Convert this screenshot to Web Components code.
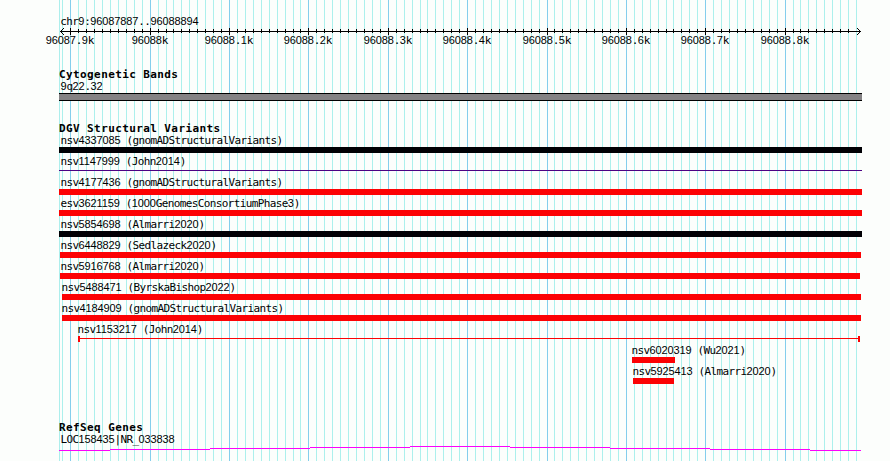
<!DOCTYPE html>
<html lang="en">
<head>
<meta charset="utf-8">
<title>chr9:96087887..96088894</title>
<style>
html,body{margin:0;background:#fcfefc}
body{width:890px;height:461px;overflow:hidden}
</style>
</head>
<body>
<genome-browser></genome-browser>
<script>
const LEFT = 59;
const gridX = i => Math.floor(70.82 + i * 800 / 100.8);
const rect = (x, y, w, h, c) => `<rect x="${x}" y="${y}" width="${w}" height="${h}" fill="${c}"/>`;

/* Fixed-pitch label; digits use an undotted zero face. */
class PitchText extends HTMLElement {
  connectedCallback() {
    const bold = this.hasAttribute('bold');
    const text = this.getAttribute('text').replace(/\d+/g, d => `<span>${d}</span>`);
    this.attachShadow({mode: 'open'}).innerHTML = `<style>
      :host{display:block;white-space:nowrap;color:#000;height:13px;line-height:13px;
        font-family:"DejaVu Sans Mono",monospace;font-size:11px;
        font-weight:${bold ? 700 : 400};letter-spacing:${bold ? .4 : -.622}px}
      span{font-family:"Liberation Sans",sans-serif;font-size:11px;line-height:0;letter-spacing:-.117px}
    </style>${text}`;
  }
}

class GridLines extends HTMLElement {
  connectedCallback() {
    let s = rect(LEFT, 0, 1, 461, '#aceeec');
    for (let i = -1; i < 100; i++) s += rect(gridX(i), 0, 1, 461, i % 10 ? '#acf0ec' : '#84ceec');
    this.attachShadow({mode: 'open'}).innerHTML = `<style>:host{position:absolute;inset:0}svg{display:block}</style>
      <svg width="890" height="461" shape-rendering="crispEdges">${s}</svg>`;
  }
}

class ScaleRuler extends HTMLElement {
  connectedCallback() {
    let s = rect(60, 3, 801, 1, '#000');
    for (let i = 0; i < 99; i++) s += i % 10 ? rect(gridX(i), 1, 1, 4, '#000') : rect(gridX(i), 0, 1, 7, '#000');
    for (let k = 1; k < 4; k++) for (const d of [-k, k])
      s += rect(60 + k, 3 + d, 1, 1, '#000') + rect(860 - k, 3 + d, 1, 1, '#000');
    const names = ['96087.9k', '96088k', ...[1,2,3,4,5,6,7,8].map(n => `96088.${n}k`)];
    let prev = 0;
    const labels = names.map((n, i) => {
      const x = gridX(i * 10) - n.length * 3 - 0.3, w = n.length * 6, gap = x - prev;
      prev = x + w;
      return `<pitch-text text="${n}" style="margin-left:${gap}px;width:${w}px"></pitch-text>`;
    }).join('');
    this.attachShadow({mode: 'open'}).innerHTML = `<style>
      :host{display:block;height:34px}svg{display:block}.l{display:flex;margin-top:-1px}.l>*{flex:none}</style>
      <svg width="890" height="7" shape-rendering="crispEdges">${s}</svg><div class="l">${labels}</div>`;
  }
}

class FeatureRow extends HTMLElement {
  connectedCallback() {
    const a = n => this.getAttribute(n);
    const x = +a('from'), e = +a('to'), w = e - x, kind = a('kind') || 'bar', c = a('color');
    const shape = {
      bar: () => rect(x, 0, w, 6, c),
      line: () => rect(x, 2, w, 1, c),
      span: () => rect(x, 2, w, 1, c) + rect(x, 0, 2, 6, c) + rect(e - 2, 0, 2, 6, c),
      band: () => rect(x, 0, w, 8, '#000') + rect(x, 1, w, 6, '#848284'),
      steps: () => [59,110,210,310,410,510,610,710,810].map((p, i, all) =>
        rect(p, Math.abs(i - 4), (all[i + 1] || e) - p, 1, c)).join('')
    }[kind]();
    this.attachShadow({mode: 'open'}).innerHTML = `<style>
      :host{display:flex;flex-direction:column;height:21px}
      pitch-text{margin:2px 0 0 ${a('label-x') - 0.5}px}
      svg{display:block;flex:none}</style>
      <pitch-text text="${a('label')}"></pitch-text>
      <svg width="890" height="8" shape-rendering="crispEdges">${shape}</svg>`;
  }
}

class TrackGroup extends HTMLElement {
  connectedCallback() {
    this.attachShadow({mode: 'open'}).innerHTML = `<style>
      :host{display:block}.t{padding-left:59px;height:10px}</style>
      <div class="t"><pitch-text bold text="${this.getAttribute('heading')}"></pitch-text></div><slot></slot>`;
  }
}

class GenomeBrowser extends HTMLElement {
  connectedCallback() {
    const R = '#fc0204', K = '#000004';
    const rows = [
      ['nsv4337085 (gnomADStructuralVariants)', 61, 59, 862, K],
      ['nsv1147999 (John2014)', 61, 59, 862, '#4c0284', 'line'],
      ['nsv4177436 (gnomADStructuralVariants)', 61, 59, 862, R],
      ['esv3621159 (1000GenomesConsortiumPhase3)', 61, 59, 862, R],
      ['nsv5854698 (Almarri2020)', 61, 59, 862, K],
      ['nsv6448829 (Sedlazeck2020)', 61, 60, 861, R],
      ['nsv5916768 (Almarri2020)', 61, 60, 860, R],
      ['nsv5488471 (ByrskaBishop2022)', 62, 62, 861, R],
      ['nsv4184909 (gnomADStructuralVariants)', 62, 62, 861, R],
      ['nsv1153217 (John2014)', 78, 78, 860, R, 'span'],
      ['nsv6020319 (Wu2021)', 632, 632, 675, R],
      ['nsv5925413 (Almarri2020)', 633, 633, 674, R]];
    const row = ([l, lx, f, t, c, k = 'bar']) =>
      `<feature-row label="${l}" label-x="${lx}" from="${f}" to="${t}" color="${c}" kind="${k}"></feature-row>`;
    this.attachShadow({mode: 'open'}).innerHTML = `<style>
      :host{display:block;position:relative;width:890px;height:461px;overflow:hidden}
      main{position:relative;display:flex;flex-direction:column;padding-top:15px}
      .r{margin-left:60.3px}
      scale-ruler{margin-bottom:6px}
      .cyto{height:54px}.dgv{height:299px}</style>
      <grid-lines></grid-lines>
      <main><pitch-text class="r" text="chr9:96087887..96088894"></pitch-text>
      <scale-ruler></scale-ruler>
      <track-group class="cyto" heading="Cytogenetic Bands">${row(['9q22.32', 61, 59, 862, '#848284', 'band'])}</track-group>
      <track-group class="dgv" heading="DGV Structural Variants">${rows.map(row).join('')}</track-group>
      <track-group heading="RefSeq Genes">${row(['LOC158435|NR_033838', 61, 59, 861, '#fc02fc', 'steps'])}</track-group></main>`;
  }
}
customElements.define('pitch-text', PitchText);
customElements.define('grid-lines', GridLines);
customElements.define('scale-ruler', ScaleRuler);
customElements.define('feature-row', FeatureRow);
customElements.define('track-group', TrackGroup);
customElements.define('genome-browser', GenomeBrowser);
</script>
</body>
</html>
